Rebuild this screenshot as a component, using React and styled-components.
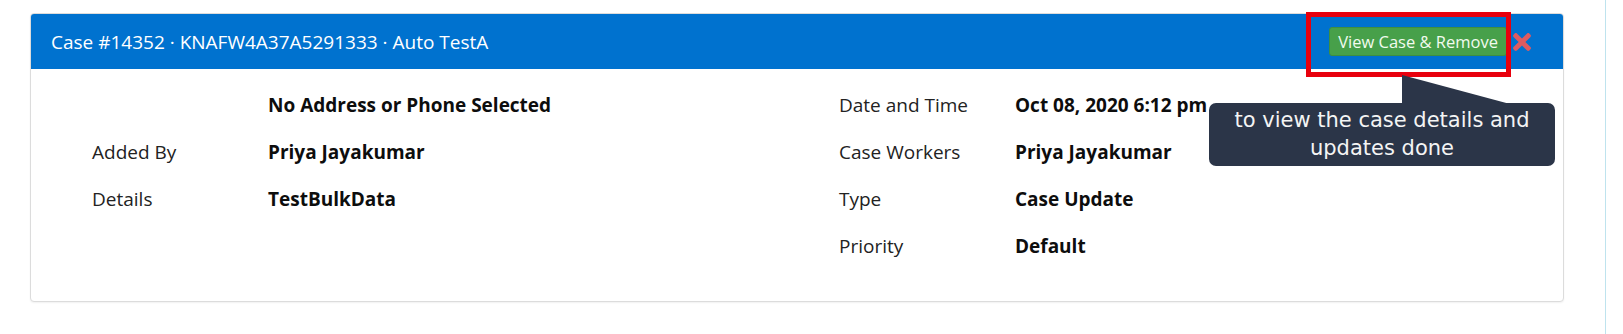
import React from "react";
import styled, { createGlobalStyle } from "styled-components";
import { FaTimes } from "react-icons/fa";

const Global = createGlobalStyle`
  html, body { margin: 0; padding: 0; background: #fff; }
  body { font-family: "Open Sans", "Liberation Sans", sans-serif; }
`;

const Page = styled.div`
  display: flex;
  height: 100vh;
`;

const Main = styled.main`
  width: 1606px;
  border-right: 1px solid #bfe3ee;
  box-sizing: border-box;
  padding: 13px 41px 0 30px;
`;

const Card = styled.section`
  position: relative;
  border: 1px solid #dcdcdc;
  border-radius: 4px;
  box-shadow: 0 1px 2px rgba(0, 0, 0, 0.06);
  background: #fff;
`;

const Header = styled.header`
  display: flex;
  align-items: center;
  justify-content: space-between;
  height: 55px;
  padding: 0 32px 0 20px;
  background: #0072cf;
  border-radius: 3px 3px 0 0;
  color: #fff;
`;

const Title = styled.h2`
  margin: 0;
  font-size: 19px;
  font-weight: 400;
`;

const Actions = styled.div`
  display: flex;
  align-items: center;
  gap: 6px;
`;

const GreenButton = styled.button`
  height: 29px;
  padding: 0 8px;
  border: 1px solid #3e8e41;
  border-radius: 3px;
  background: #47a04a;
  color: #f2fbef;
  font-family: "Open Sans", "Liberation Sans", sans-serif;
  font-size: 16.5px;
`;

const CloseIcon = styled(FaTimes)`
  color: #de5b60;
  width: 18px;
  height: 26px;
`;

const Body = styled.div`
  display: grid;
  grid-template-columns: 176px 571px 176px 1fr;
  grid-auto-rows: 47px;
  align-items: center;
  padding: 12px 0 32px 61px;
  font-size: 19px;
`;

const Label = styled.div`
  color: #222;
  font-weight: 400;
`;

const Value = styled.div`
  color: #0d0d0d;
  font-weight: 700;
`;

const Highlight = styled.div`
  position: absolute;
  left: 1275px;
  top: -2px;
  width: 195px;
  height: 55px;
  border: 5px solid #e8000d;
`;

const Tooltip = styled.div`
  position: absolute;
  left: 1178px;
  top: 89px;
  width: 346px;
  box-sizing: border-box;
  padding: 3px 6px 4px;
  background: #2b3548;
  border-radius: 7px;
  color: #f4f4f4;
  font-family: "DejaVu Sans", "Liberation Sans", sans-serif;
  font-size: 21px;
  line-height: 28px;
  text-align: center;
`;

const Arrow = styled.svg`
  position: absolute;
  left: 193px;
  top: -28px;
`;

const rows = [
  ["", "No Address or Phone Selected", "Date and Time", "Oct 08, 2020 6:12 pm"],
  ["Added By", "Priya Jayakumar", "Case Workers", "Priya Jayakumar"],
  ["Details", "TestBulkData", "Type", "Case Update"],
  ["", "", "Priority", "Default"],
];

export default function App() {
  return (
    <Page>
      <Global />
      <Main>
        <Card>
          <Header>
            <Title>Case #14352 · KNAFW4A37A5291333 · Auto TestA</Title>
            <Actions>
              <GreenButton>View Case &amp; Remove</GreenButton>
              <CloseIcon />
            </Actions>
          </Header>
          <Body>
            {rows.map((r, i) => (
              <React.Fragment key={i}>
                <Label>{r[0]}</Label>
                <Value>{r[1]}</Value>
                <Label>{r[2]}</Label>
                <Value>{r[3]}</Value>
              </React.Fragment>
            ))}
          </Body>
          <Highlight />
          <Tooltip>
            <Arrow width="110" height="29" viewBox="0 0 110 29">
              <polygon points="0,0 0,29 108,29" fill="#2b3548" />
            </Arrow>
            to view the case details and updates done
          </Tooltip>
        </Card>
      </Main>
    </Page>
  );
}
